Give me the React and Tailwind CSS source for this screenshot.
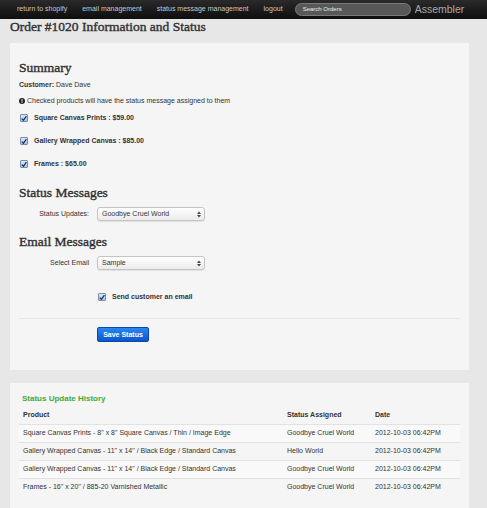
import React from "react";

const navLinks = ["return to shopify", "email management", "status message management", "logout"];

const products = [
  "Square Canvas Prints : $59.00",
  "Gallery Wrapped Canvas : $85.00",
  "Frames : $65.00",
];

const history = [
  ["Square Canvas Prints - 8\" x 8\" Square Canvas / Thin / Image Edge", "Goodbye Cruel World", "2012-10-03 06:42PM"],
  ["Gallery Wrapped Canvas - 11\" x 14\" / Black Edge / Standard Canvas", "Hello World", "2012-10-03 06:42PM"],
  ["Gallery Wrapped Canvas - 11\" x 14\" / Black Edge / Standard Canvas", "Goodbye Cruel World", "2012-10-03 06:42PM"],
  ["Frames - 16\" x 20\" / 885-20 Varnished Metallic", "Goodbye Cruel World", "2012-10-03 06:42PM"],
];

function CheckBox() {
  return (
    <span className="flex h-[8px] w-[8px] shrink-0 items-center justify-center rounded-[1px] border border-[#7a8ea8] bg-gradient-to-b from-[#dbe9f9] to-[#9ec3ee]">
      <svg width="7" height="7" viewBox="0 0 10 10">
        <path d="M1.5 5.2 L4 8 L9 1" fill="none" stroke="#1d2b4a" strokeWidth="2" />
      </svg>
    </span>
  );
}

function Select({ value }) {
  return (
    <div className="flex h-[14px] w-[108px] items-center justify-between rounded-[3px] border border-[#c4c4c4] bg-gradient-to-b from-[#ffffff] to-[#ebebeb] pl-[4px] pr-[3px] shadow-[0_1px_1px_rgba(0,0,0,0.08)]">
      <span className="text-[7px] leading-[10px] text-[#333]">{value}</span>
      <svg width="4" height="7" viewBox="0 0 4 7">
        <path d="M0 3 L2 0.5 L4 3 Z M0 4 L2 6.5 L4 4 Z" fill="#444" />
      </svg>
    </div>
  );
}

function Heading({ children, className = "" }) {
  return (
    <h2 className={`font-['Liberation_Serif',serif] text-[13.5px] leading-[15px] text-[#333] [-webkit-text-stroke:0.4px_#333] ${className}`}>
      {children}
    </h2>
  );
}

export default function App() {
  return (
    <div className="min-h-screen bg-[#e7e7e7] font-['Liberation_Sans',Arial,sans-serif] text-[#333]">
      {/* Top bar */}
      <nav className="flex h-[19px] items-center bg-gradient-to-b from-[#2a2a2a] to-[#0e0e0e] pl-[17px]">
        <div className="flex items-center gap-[15px] text-[7px] text-[#c8c8c8]">
          {navLinks.map((l) => (
            <span key={l}>{l}</span>
          ))}
        </div>
        <div className="ml-[12px] flex h-[13px] w-[116px] items-center rounded-full border border-[#7a7a7a] bg-[#585858] pl-[7px] text-[6px] text-[#eee]">
          Search Orders
        </div>
        <span className="ml-[4px] text-[10.5px] text-[#a9a9a9]">Assembler</span>
      </nav>

      <h1 className="pl-[10px] font-['Liberation_Serif',serif] text-[13.5px] leading-[16px] text-[#333] [-webkit-text-stroke:0.4px_#333]">
        Order #1020 Information and Status
      </h1>

      {/* Order panel */}
      <section className="mx-[10px] mt-[8px] w-[459px] bg-[#f5f5f5] px-[9px] pt-[17px] pb-[28px]">
        <Heading>Summary</Heading>
        <p className="mt-[5px] text-[7px] leading-[10px]">
          <b>Customer:</b> Dave Dave
        </p>
        <p className="mt-[6px] flex items-center gap-[2px] text-[7px] leading-[10px]">
          <svg width="6" height="6" viewBox="0 0 12 12">
            <circle cx="6" cy="6" r="6" fill="#222" />
            <rect x="5" y="2.2" width="2" height="5" fill="#fff" />
            <rect x="5" y="8.2" width="2" height="1.8" fill="#fff" />
          </svg>
          Checked products will have the status message assigned to them
        </p>
        <div className="mt-[7px] flex flex-col gap-[13px] pl-[1px]">
          {products.map((p) => (
            <label key={p} className="flex h-[10px] items-center gap-[6px] text-[7px] font-bold">
              <CheckBox />
              {p}
            </label>
          ))}
        </div>

        <Heading className="mt-[16px]">Status Messages</Heading>
        <div className="mt-[7px] flex items-center">
          <span className="w-[70px] text-right text-[7px] leading-[10px]">Status Updates:</span>
          <div className="ml-[8px]">
            <Select value="Goodbye Cruel World" />
          </div>
        </div>

        <Heading className="mt-[13px]">Email Messages</Heading>
        <div className="mt-[7px] flex items-center">
          <span className="w-[70px] text-right text-[7px] leading-[10px]">Select Email</span>
          <div className="ml-[8px]">
            <Select value="Sample" />
          </div>
        </div>

        <label className="ml-[79px] mt-[22px] flex h-[10px] items-center gap-[6px] text-[7px] font-bold">
          <CheckBox />
          Send customer an email
        </label>

        <div className="mt-[16px] border-t border-[#e6e6e6]" />

        <button className="ml-[78px] mt-[8px] block h-[15px] w-[52px] rounded-[2px] border border-[#0a46b0] bg-gradient-to-b from-[#2b86f0] to-[#0a56cc] text-[7px] font-bold leading-[10px] text-white">
          Save Status
        </button>
      </section>

      {/* History panel */}
      <section className="mx-[10px] mt-[13px] w-[459px] bg-[#f5f5f5] px-[9px] pt-[11px] pb-[20px]">
        <h3 className="pl-[3px] text-[8px] font-bold leading-[10px] text-[#3ea83e]">Status Update History</h3>
        <table className="mt-[2px] w-[441px] border-collapse text-left text-[7px] leading-[10px]">
          <thead>
            <tr className="h-[18px]">
              <th className="pl-[4px] font-bold">Product</th>
              <th className="w-[88px] font-bold">Status Assigned</th>
              <th className="w-[85px] font-bold">Date</th>
            </tr>
          </thead>
          <tbody>
            {history.map((r, i) => (
              <tr key={i} className={`h-[18px] border-t border-[#e2e2e2] ${i % 2 === 0 ? "bg-[#f9f9f9]" : ""}`}>
                <td className="pl-[4px]">{r[0]}</td>
                <td>{r[1]}</td>
                <td>{r[2]}</td>
              </tr>
            ))}
          </tbody>
        </table>
      </section>
    </div>
  );
}
